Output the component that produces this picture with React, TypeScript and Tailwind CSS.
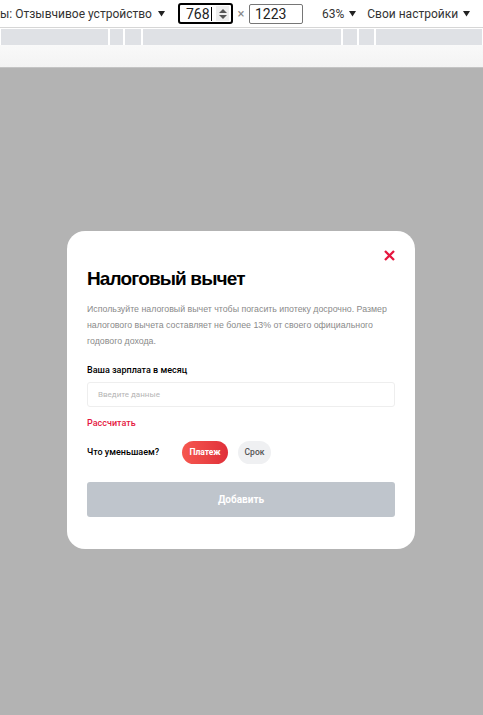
import React from "react";

function Tri({ className = "" }: { className?: string }) {
  return (
    <svg className={className} width="7" height="7" viewBox="0 0 7 7">
      <path d="M0 1 L7 1 L3.5 6.5 Z" fill="#222" />
    </svg>
  );
}

export default function App() {
  const seg = "bg-[#dfe1e5] h-full";
  return (
    <div className="w-[483px] h-[715px] flex flex-col overflow-hidden bg-[#b3b3b3]">
      {/* Devtools toolbar */}
      <div className="h-[27px] bg-white border-b border-[#d6d6d6] flex items-center text-[12px] text-[#333] whitespace-nowrap [font-family:Roboto,'Noto_Sans',sans-serif] box-content">
        <div className="flex items-center w-[178px] shrink-0 overflow-hidden">
          <span>ы: Отзывчивое устройство</span>
          <Tri className="ml-[6px]" />
        </div>
        <div className="w-[55px] h-[21px] shrink-0 border-2 border-black rounded-[3px] flex items-center pl-[6px] pr-[2px] text-[14px] leading-none text-[#222]">
          <span>768</span>
          <span className="w-px h-[14px] bg-black ml-[1px]" />
          <span className="ml-auto w-[13px] h-[15px] bg-[#eeeeee] flex flex-col items-center justify-center gap-[2px]">
            <svg width="8" height="4" viewBox="0 0 8 4"><path d="M0 4 L4 0 L8 4 Z" fill="#555" /></svg>
            <svg width="8" height="4" viewBox="0 0 8 4"><path d="M0 0 L4 4 L8 0 Z" fill="#555" /></svg>
          </span>
        </div>
        <span className="ml-[2px] text-[#888] text-[13px] w-[12px] text-center">×</span>
        <div className="ml-[2px] w-[54px] h-[20px] shrink-0 border border-[#767676] rounded-[2px] flex items-center pl-[5px] text-[14px] leading-none text-[#222]">
          1223
        </div>
        <span className="ml-[19px]">63%</span>
        <Tri className="ml-[5px]" />
        <span className="ml-[11px]">Свои настройки</span>
        <Tri className="ml-[5px]" />
      </div>
      <div className="h-px bg-white" />
      {/* ruler */}
      <div className="h-[16px] bg-white flex gap-[2px] pl-[1px]">
        <div className={`${seg} w-[107px]`} />
        <div className={`${seg} w-[13px]`} />
        <div className={`${seg} w-[16px]`} />
        <div className={`${seg} w-[198px]`} />
        <div className={`${seg} w-[14px]`} />
        <div className={`${seg} w-[15px]`} />
        <div className={`${seg} w-[106px]`} />
      </div>
      <div className="h-[22px] bg-gradient-to-b from-[#f9f9f9] to-[#f3f3f3] border-b border-[#c4c4c4] box-content" />
      {/* page */}
      <div className="flex-1 flex items-center justify-center pb-[3px] [font-family:'Liberation_Sans',Arial,sans-serif]">
        <div className="w-[348px] h-[318px] mr-[1px] bg-white rounded-[18px] px-[20px] pt-[19px] flex flex-col">
          <div className="flex justify-end">
            <svg width="11" height="11" viewBox="0 0 11 11">
              <path d="M1 1 L10 10 M10 1 L1 10" stroke="#e5173f" strokeWidth="2.3" strokeLinecap="butt" />
            </svg>
          </div>
          <h1 className="mt-[6px] text-[19px] leading-[24px] font-bold tracking-[-0.85px] text-black">Налоговый вычет</h1>
          <p className="mt-[10px] text-[8.8px] leading-[16px] text-[#8a8a8a]">
            Используйте налоговый вычет чтобы погасить ипотеку досрочно. Размер налогового вычета составляет не более 13% от своего официального годового дохода.
          </p>
          <div className="mt-[15px] text-[9px] leading-[12px] font-medium text-black [font-family:Roboto,sans-serif]">Ваша зарплата в месяц</div>
          <div className="mt-[6px] h-[25px] border border-[#eeeeee] rounded-[3px] flex items-center pl-[10px] text-[8px] text-[#b5b5b5] [font-family:Roboto,sans-serif]">
            Введите данные
          </div>
          <div className="mt-[10px] text-[9px] leading-[12px] font-medium text-[#e5173f] [font-family:Roboto,sans-serif]">Рассчитать</div>
          <div className="mt-[12px] flex items-center h-[23px] [font-family:Roboto,sans-serif]">
            <span className="w-[95px] text-[9px] font-medium text-black">Что уменьшаем?</span>
            <span className="h-[23px] w-[46px] rounded-full bg-gradient-to-r from-[#f6574f] to-[#e02f3a] text-white text-[8.5px] font-bold flex items-center justify-center">Платеж</span>
            <span className="ml-[10px] h-[23px] w-[33px] rounded-full bg-[#eff0f2] text-[#555] text-[8.5px] font-medium flex items-center justify-center">Срок</span>
          </div>
          <div className="mt-[18px] h-[35px] rounded-[3px] bg-[#bfc5cc] flex items-center justify-center text-white text-[10px] font-bold [font-family:Roboto,sans-serif]">
            Добавить
          </div>
        </div>
      </div>
    </div>
  );
}
